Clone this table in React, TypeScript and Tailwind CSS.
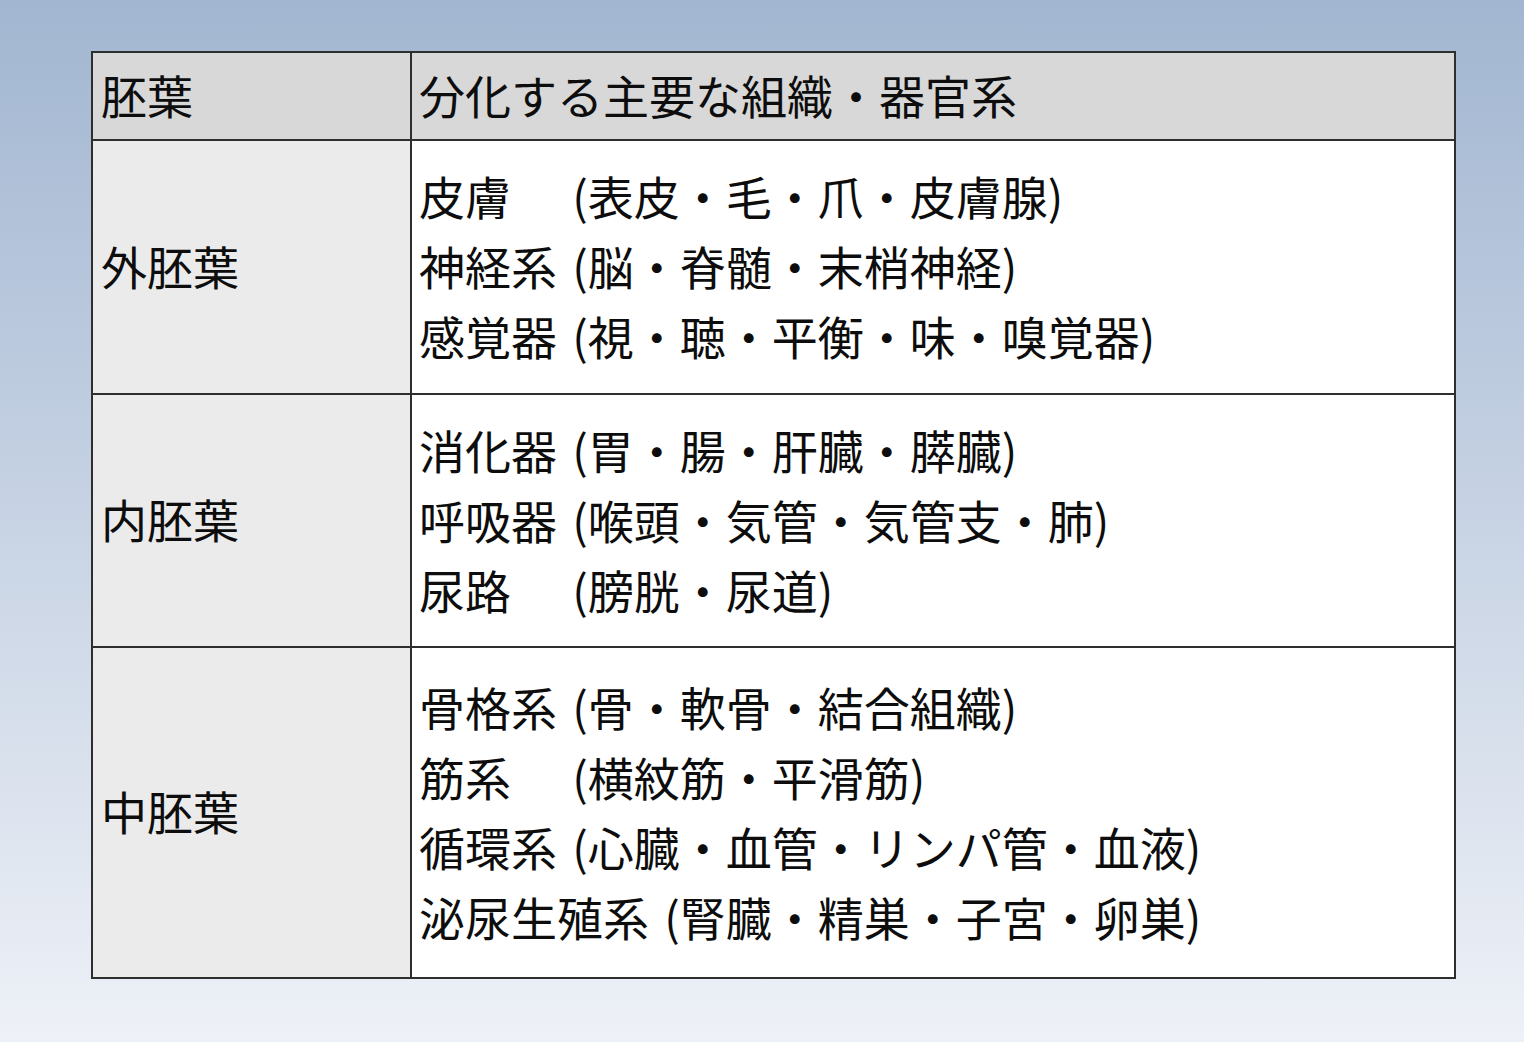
import React from 'react';

type Row = {
  layer: string;
  height: string;
  items: [string, string][];
};

const rows: Row[] = [
  {
    layer: '外胚葉',
    height: 'h-[254px]',
    items: [
      ['皮膚', '(表皮・毛・爪・皮膚腺)'],
      ['神経系', '(脳・脊髄・末梢神経)'],
      ['感覚器', '(視・聴・平衡・味・嗅覚器)'],
    ],
  },
  {
    layer: '内胚葉',
    height: 'h-[253px]',
    items: [
      ['消化器', '(胃・腸・肝臓・膵臓)'],
      ['呼吸器', '(喉頭・気管・気管支・肺)'],
      ['尿路', '(膀胱・尿道)'],
    ],
  },
  {
    layer: '中胚葉',
    height: 'h-[331px]',
    items: [
      ['骨格系', '(骨・軟骨・結合組織)'],
      ['筋系', '(横紋筋・平滑筋)'],
      ['循環系', '(心臓・血管・リンパ管・血液)'],
      ['泌尿生殖系', '(腎臓・精巣・子宮・卵巣)'],
    ],
  },
];

export default function App() {
  return (
    <div className="min-h-[1042px] w-full bg-gradient-to-b from-[#a2b6d1] to-[#eef1f7] pt-[51px] pl-[91px] font-['Noto_Sans_CJK_JP','Noto_Sans',sans-serif] text-[46px] text-[#0d0d0d]">
      <div className="w-[1365px] border-2 border-[#2e2e2e] bg-white">
        <div className="flex h-[86px]">
          <div className="flex w-[319px] items-center border-r-2 border-[#2e2e2e] bg-[#d8d8d8] pl-2 pb-1">胚葉</div>
          <div className="flex flex-1 items-center bg-[#d8d8d8] pl-[7px] pb-1">分化する主要な組織・器官系</div>
        </div>
        {rows.map((row) => (
          <div key={row.layer} className={`flex border-t-2 border-[#2e2e2e] ${row.height}`}>
            <div className="flex w-[319px] items-center border-r-2 border-[#2e2e2e] bg-[#ebebeb] pl-2 pb-1">{row.layer}</div>
            <div className="flex flex-1 flex-col justify-center bg-white pl-[7px] pb-1">
              {row.items.map(([name, parts]) => (
                <div key={name} className="h-[70px] leading-[70px] whitespace-nowrap">
                  <span className="mr-[5px] inline-block min-w-[3em]">{name}</span> {parts}
                </div>
              ))}
            </div>
          </div>
        ))}
      </div>
    </div>
  );
}
